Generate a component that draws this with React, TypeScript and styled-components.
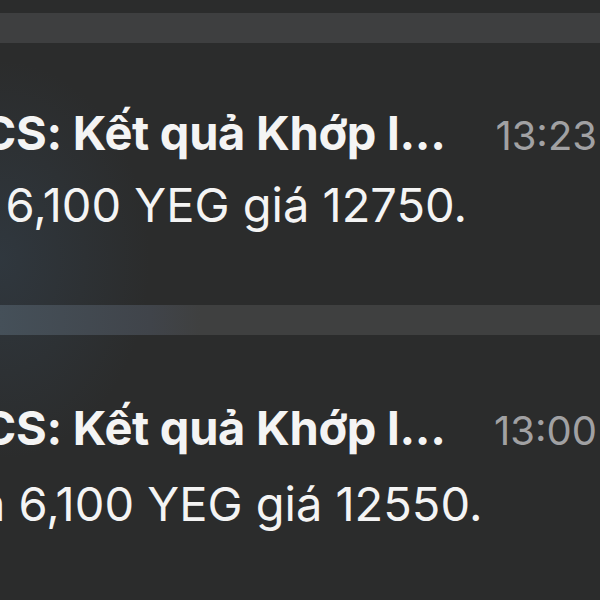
import React from 'react';
import styled, { createGlobalStyle } from 'styled-components';

interface Notice {
  lead: string;
  time: string;
  body: string;
  shift: number;
  gap: number;
  tint: boolean;
}

const notices: Notice[] = [
  { lead: 'TCS: Kết quả Khớp l...', time: '13:23', body: 'bán 6,100 YEG giá 12750.', shift: -91, gap: 17, tint: false },
  { lead: 'TCS: Kết quả Khớp l...', time: '13:00', body: 'mua 6,100 YEG giá 12550.', shift: -90, gap: 21, tint: true },
];

const GlobalStyle = createGlobalStyle`
  html, body {
    margin: 0;
    padding: 0;
    background: #2b2c2c;
  }
  body {
    font-family: Inter, "Noto Sans", sans-serif;
    -webkit-font-smoothing: antialiased;
  }
`;

const Screen = styled.div`
  width: 600px;
  height: 600px;
  overflow: hidden;
  display: flex;
  flex-direction: column;
  background:
    radial-gradient(ellipse 150px 200px at 0px 260px, rgba(60, 85, 110, 0.28), rgba(60, 85, 110, 0) 100%),
    #2b2c2c;
`;

const TopEdge = styled.div`
  height: 13px;
  flex-shrink: 0;
`;

const Divider = styled.div<{ $tint: boolean }>`
  height: 30px;
  flex-shrink: 0;
  background: ${(p) =>
    p.$tint
      ? 'linear-gradient(90deg, #455059 0px, #40444a 150px, #3f4040 200px, #3f4040 100%)'
      : '#3e3f40'};
`;

const Card = styled.div<{ $tall?: boolean }>`
  flex-shrink: 0;
  height: ${(p) => (p.$tall ? 265 : 262)}px;
  display: flex;
  flex-direction: column;
  padding-top: ${(p) => (p.$tall ? 67 : 64)}px;
  box-sizing: border-box;
`;

const Header = styled.div`
  display: flex;
  align-items: baseline;
  justify-content: space-between;
  padding-right: 3px;
`;

const Title = styled.div`
  margin-left: -48px;
  color: #f4f4f4;
  font-size: 47px;
  font-weight: 700;
  line-height: 52px;
  letter-spacing: -0.3px;
  white-space: nowrap;
`;

const Time = styled.div`
  color: #a1a1a3;
  font-size: 40px;
  font-weight: 400;
  line-height: 52px;
  white-space: nowrap;
`;

const Body = styled.div<{ $shift: number; $gap: number }>`
  margin-top: ${(p) => p.$gap}px;
  margin-left: ${(p) => p.$shift}px;
  color: #f4f4f4;
  font-size: 47px;
  font-weight: 400;
  line-height: 52px;
  white-space: nowrap;
`;

export default function App() {
  return (
    <>
      <GlobalStyle />
      <Screen>
        <TopEdge />
        {notices.map((n, i) => (
          <React.Fragment key={n.time}>
            <Divider $tint={n.tint} />
            <Card $tall={i === 1}>
              <Header>
                <Title>{n.lead}</Title>
                <Time>{n.time}</Time>
              </Header>
              <Body $shift={n.shift} $gap={n.gap}>
                {n.body}
              </Body>
            </Card>
          </React.Fragment>
        ))}
      </Screen>
    </>
  );
}
